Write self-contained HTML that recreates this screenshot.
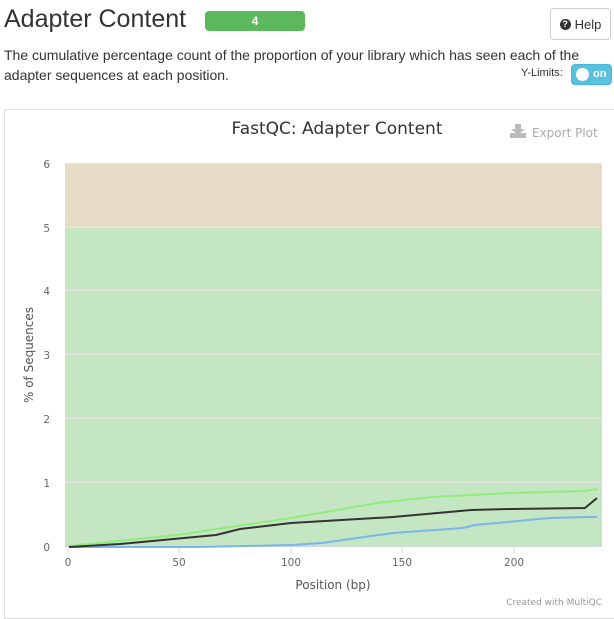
<!DOCTYPE html>
<html><head><style>
body{margin:0;width:614px;height:609px;overflow:hidden;background:#fff;font-family:"Liberation Sans",sans-serif;color:#333;position:relative}
.a{position:absolute}
</style></head><body>
<div class="a" style="left:4px;top:5px;font-size:25px;color:#333">Adapter Content</div>
<div class="a" style="left:205px;top:11px;width:100px;height:20px;background:#5cb85c;border-radius:4px;color:#fff;font-size:12px;font-weight:bold;text-align:center;line-height:20px">4</div>
<div class="a" style="left:550px;top:8px;width:59px;height:30px;border:1px solid #ccc;border-radius:4px;font-size:13px;display:flex;align-items:center;justify-content:center;gap:4px;color:#333"><span style="display:inline-block;width:11px;height:11px;border-radius:50%;background:#333;color:#fff;font-size:9px;line-height:11px;font-weight:bold;text-align:center">?</span><span>Help</span></div>
<div class="a" style="left:4px;top:45px;font-size:14px;line-height:20px;width:600px">The cumulative percentage count of the proportion of your library which has seen each of the<br>adapter sequences at each position.</div>
<div class="a" style="left:521px;top:67px;font-size:11px">Y-Limits:</div>
<div class="a" style="left:571px;top:64px;width:41px;height:21px;background:#5bc0de;border:1px solid #46b8da;border-radius:4px;box-sizing:border-box"><div class="a" style="left:4px;top:3px;width:13px;height:13px;border-radius:50%;background:#fff"></div><div class="a" style="left:21px;top:3px;color:#fff;font-size:11px;font-weight:bold">on</div></div>
<div class="a" style="left:4px;top:109px;width:620px;height:510px;border:1px solid #ddd;box-sizing:border-box"></div>
<svg class="a" style="left:0;top:0" width="614" height="609" font-family="DejaVu Sans, sans-serif">
<text x="337" y="134" font-size="17" text-anchor="middle" fill="#333">FastQC: Adapter Content</text>
<g fill="#bbb"><rect x="510" y="133" width="16" height="5"/><rect x="515" y="124" width="6" height="6"/><path d="M511 129h14l-7 6z"/></g>
<text x="532" y="137" font-size="12" fill="#aaa">Export Plot</text>
<rect x="65" y="163" width="537" height="64" fill="#e6dcc5"/>
<rect x="65" y="227" width="537" height="319" fill="#c4e6c3"/>
<g stroke="#e6e6e6" stroke-width="1"><line x1="65" y1="163.5" x2="602" y2="163.5"/><line x1="65" y1="227.5" x2="602" y2="227.5"/><line x1="65" y1="290.5" x2="602" y2="290.5"/><line x1="65" y1="354.5" x2="602" y2="354.5"/><line x1="65" y1="418.5" x2="602" y2="418.5"/><line x1="65" y1="482.5" x2="602" y2="482.5"/></g>
<line x1="65" y1="546.5" x2="602" y2="546.5" stroke="#ccd6eb"/>
<g fill="#666" font-size="10.5" text-anchor="end"><text x="50" y="168">6</text><text x="50" y="232">5</text><text x="50" y="295">4</text><text x="50" y="359">3</text><text x="50" y="423">2</text><text x="50" y="487">1</text><text x="50" y="551">0</text></g>
<g fill="#666" font-size="10.5" text-anchor="middle"><text x="68" y="566">0</text><text x="179" y="566">50</text><text x="291" y="566">100</text><text x="402" y="566">150</text><text x="514" y="566">200</text></g>
<g stroke="#ccd6eb"><line x1="68" y1="547" x2="68" y2="553"/><line x1="179" y1="547" x2="179" y2="553"/><line x1="291" y1="547" x2="291" y2="553"/><line x1="402" y1="547" x2="402" y2="553"/><line x1="514" y1="547" x2="514" y2="553"/></g>
<text x="333" y="589" font-size="12" fill="#555" text-anchor="middle">Position (bp)</text>
<text transform="translate(33,355) rotate(-90)" font-size="12" fill="#555" text-anchor="middle">% of Sequences</text>
<text x="602" y="605" font-size="9" fill="#999" text-anchor="end">Created with MultiQC</text>
<polyline fill="none" stroke="#7cb5ec" stroke-width="2" points="69,547 200,547 291,545 322,543 393,533 463,528 475,525 550,518 585,517 597,517"/>
<polyline fill="none" stroke="#90ed7d" stroke-width="2" points="69,546 177,535 291,518 326,512 377,503 432,497 511,493 585,491 597,489"/>
<polyline fill="none" stroke="#333" stroke-width="2" points="69,547 120,544 216,535 240,529 291,523 393,517 471,510 511,509 585,508 597,498"/>
</svg>
</body></html>
